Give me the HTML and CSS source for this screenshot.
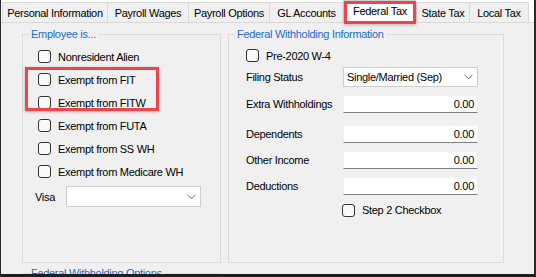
FILE: index.html
```html
<!DOCTYPE html>
<html>
<head>
<meta charset="utf-8">
<link rel="stylesheet" href="styles.css">
</head>
<body>
<div class="frame">
  <div class="tabs">
    <div class="tab w-pi">Personal Information</div>
    <div class="tab w-pw">Payroll Wages</div>
    <div class="tab w-po">Payroll Options</div>
    <div class="tab w-gl">GL Accounts</div>
    <div class="tab w-ft selected">Federal Tax<span class="mark mark-tab"></span></div>
    <div class="tab w-st">State Tax</div>
    <div class="tab w-lt last">Local Tax</div>
  </div>
  <div class="panel">
    <div class="columns">
      <div class="group left">
        <span class="legend">Employee is...</span>
        <span class="mark mark-fit"></span>
        <div class="check-row"><span class="box"></span>Nonresident Alien</div>
        <div class="check-row"><span class="box"></span>Exempt from FIT</div>
        <div class="check-row"><span class="box"></span>Exempt from FITW</div>
        <div class="check-row"><span class="box"></span>Exempt from FUTA</div>
        <div class="check-row"><span class="box"></span>Exempt from SS WH</div>
        <div class="check-row"><span class="box"></span>Exempt from Medicare WH</div>
        <div class="visa-row">
          <span class="visa-label">Visa</span>
          <div class="select visa-select">
            <span></span>
            <svg class="chev" width="9" height="6" viewBox="0 0 9 6"><polyline points="0.5,0.8 4.5,4.8 8.5,0.8" fill="none" stroke="#6a6a6a" stroke-width="1"/></svg>
          </div>
        </div>
      </div>
      <div class="group right">
        <span class="legend">Federal Withholding Information</span>
        <div class="check-row r-pre"><span class="box"></span>Pre-2020 W-4</div>
        <div class="field r-filing">
          <span class="flabel">Filing Status</span>
          <div class="select">
            <span>Single/Married (Sep)</span>
            <svg class="chev" width="9" height="6" viewBox="0 0 9 6"><polyline points="0.5,0.8 4.5,4.8 8.5,0.8" fill="none" stroke="#6a6a6a" stroke-width="1"/></svg>
          </div>
        </div>
        <div class="field r-extra">
          <span class="flabel">Extra Withholdings</span>
          <div class="input">0.00</div>
        </div>
        <div class="field r-dep">
          <span class="flabel">Dependents</span>
          <div class="input">0.00</div>
        </div>
        <div class="field r-other">
          <span class="flabel">Other Income</span>
          <div class="input">0.00</div>
        </div>
        <div class="field r-ded">
          <span class="flabel">Deductions</span>
          <div class="input">0.00</div>
        </div>
        <div class="check-row r-step"><span class="box"></span>Step 2 Checkbox</div>
      </div>
    </div>
    <div class="group bottom">
      <span class="legend">Federal Withholding Options</span>
    </div>
  </div>
</div>
</body>
</html>
```

FILE: styles.css
```css
* { box-sizing: border-box; }
html, body {
  margin: 0;
  padding: 0;
}
body {
  width: 536px;
  height: 277px;
  overflow: hidden;
  background: #f0f0f0;
  font-family: "Liberation Sans", Arial, sans-serif;
  font-size: 11px;
  letter-spacing: -0.3px;
  color: #000;
}
.frame {
  width: 536px;
  height: 277px;
  border-left: 1px solid #2a2a2a;
  border-right: 2px solid #2a2a2a;
  border-bottom: 3px solid #1e1e1e;
  overflow: hidden;
  background: #f0f0f0;
}
.tabs {
  height: 22px;
  display: flex;
  align-items: flex-end;
  padding-left: 1px;
  background: #ffffff;
  position: relative;
  z-index: 2;
}
.tab {
  height: 20px;
  border: 1px solid #d9d9d9;
  border-right: none;
  border-bottom: none;
  background: #f0f0f0;
  display: flex;
  align-items: center;
  justify-content: center;
  padding-top: 1px;
  white-space: nowrap;
}
.tab.last { border-right: 1px solid #d9d9d9; }
.tab.selected {
  height: 23px;
  margin-bottom: -1px;
  background: #fbfbfb;
  position: relative;
  padding-top: 0;
  padding-bottom: 3px;
}
.w-pi { width: 105px; }
.w-pw { width: 81px; }
.w-po { width: 81px; }
.w-gl { width: 74px; }
.w-ft { width: 73px; }
.w-st { width: 53px; }
.w-lt { width: 60px; }

.mark {
  position: absolute;
  border: 3px solid #e8474b;
  box-shadow: 0 1px 3px rgba(0,0,0,0.25);
  pointer-events: none;
}
.mark-tab {
  left: 0;
  top: 0;
  width: 72px;
  height: 23px;
}
.mark-fit {
  left: 2px;
  top: 32px;
  width: 134px;
  height: 44px;
}

.panel {
  border-top: 1px solid #d9d9d9;
  padding: 11px 0 0 21px;
}
.columns {
  display: flex;
  gap: 7px;
  align-items: flex-start;
}
.group {
  position: relative;
  border: 1px solid #dcdcdc;
}
.legend {
  position: absolute;
  top: -8px;
  left: 6px;
  padding: 0 2px;
  background: #f0f0f0;
  color: #1c6dd0;
  line-height: 14px;
  white-space: nowrap;
}
.group.left {
  width: 199px;
  height: 229px;
  padding-top: 10px;
}
.group.right {
  width: 276px;
  height: 229px;
  padding-top: 10px;
}
.group.bottom {
  width: 199px;
  height: 40px;
  margin-top: 10px;
}
.check-row {
  height: 23px;
  display: flex;
  align-items: center;
  padding-left: 15px;
  white-space: nowrap;
}
.box {
  width: 13px;
  height: 13px;
  border: 1px solid #333;
  border-radius: 3px;
  background: #f9f9f9;
  margin-right: 7px;
  flex: none;
}
.visa-row {
  display: flex;
  align-items: center;
  height: 21px;
  margin-top: 3px;
  padding-left: 12px;
}
.visa-label { width: 31px; }
.select {
  width: 135px;
  height: 21px;
  background: #fff;
  border: 1px solid #cfcfcf;
  display: flex;
  align-items: center;
  justify-content: space-between;
  padding: 0 4px 0 3px;
  white-space: nowrap;
}
.chev { flex: none; }
.r-pre { height: 21px; padding-left: 17px; }
.field {
  display: flex;
  align-items: center;
  padding-left: 17px;
  white-space: nowrap;
}
.flabel { width: 97px; }
.r-filing { margin-top: 1px; }
.r-filing .select { height: 20px; }
.input {
  width: 135px;
  height: 18px;
  background: #fff;
  border: 1px solid #f2f2f2;
  border-bottom: 1px solid #7f7f7f;
  text-align: right;
  padding-right: 3px;
  line-height: 16px;
}
.r-extra { margin-top: 8px; }
.r-dep { margin-top: 12px; }
.r-other { margin-top: 8px; }
.r-ded { margin-top: 8px; }
.r-step { margin-top: 4px; height: 22px; padding-left: 113px; }
```
